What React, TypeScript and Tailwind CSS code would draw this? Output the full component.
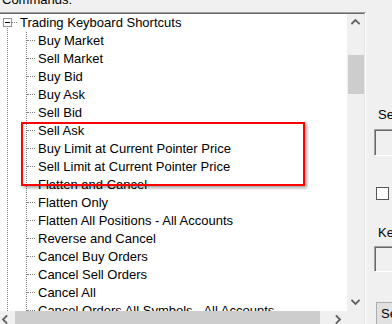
const commands = [
  "Buy Market",
  "Sell Market",
  "Buy Bid",
  "Buy Ask",
  "Sell Bid",
  "Sell Ask",
  "Buy Limit at Current Pointer Price",
  "Sell Limit at Current Pointer Price",
  "Flatten and Cancel",
  "Flatten Only",
  "Flatten All Positions - All Accounts",
  "Reverse and Cancel",
  "Cancel Buy Orders",
  "Cancel Sell Orders",
  "Cancel All",
  "Cancel Orders All Symbols - All Accounts",
];

function Chevron({ dir }: { dir: "up" | "down" | "left" | "right" }) {
  const d = {
    up: "M1 5.5 4.5 2 8 5.5",
    down: "M1 2.5 4.5 6 8 2.5",
    left: "M5.5 1 2 4.5 5.5 8",
    right: "M2.5 1 6 4.5 2.5 8",
  }[dir];
  return (
    <svg width="9" height="9" viewBox="0 0 9 9" fill="none">
      <path d={d} stroke="#606060" strokeWidth="1.8" strokeLinecap="square" />
    </svg>
  );
}

function TextBox() {
  return (
    <div className="h-full border-t border-l border-[#a0a0a0] border-r border-b border-r-white border-b-white">
      <div className="h-full border-t border-l border-[#696969] bg-[#f0f0f0]" />
    </div>
  );
}

export default function App() {
  return (
    <div className="flex h-[324px] w-[392px] overflow-hidden bg-[#f0f0f0] font-['Liberation_Sans',Arial,sans-serif] text-[13px] leading-[15px] text-black">
      {/* left: commands tree */}
      <div className="flex w-[366px] shrink-0 flex-col">
        <div className="-mt-[8px] h-[20px] shrink-0 pl-[2px]">Commands:</div>

        <div className="flex-1 border-t border-r border-t-[#a0a0a0] border-r-white">
          <div className="flex h-full flex-col border-t border-r border-t-[#696969] border-r-[#e3e3e3]">
            <div className="flex h-[297px] shrink-0">
              <div className="relative w-[347px] overflow-hidden bg-white">
                {/* tree connector lines */}
                <div className="absolute top-[14px] bottom-0 left-[7px] border-l border-dotted border-[#808080]" />
                <div className="absolute top-[18px] bottom-0 left-[26px] border-l border-dotted border-[#808080]" />

                <div className="-mt-[1px] flex flex-col">
                  <div className="flex h-[18px] items-center">
                    <span className="ml-[3px] flex h-[9px] w-[9px] items-center justify-center border border-[#919191] bg-white">
                      <span className="h-px w-[5px] bg-black" />
                    </span>
                    <span className="w-[5px] border-t border-dotted border-[#808080]" />
                    <span className="ml-[3px] whitespace-nowrap">Trading Keyboard Shortcuts</span>
                  </div>
                  {commands.map((c) => (
                    <div key={c} className="flex h-[18px] items-center">
                      <span className="ml-[27px] w-[8px] border-t border-dotted border-[#808080]" />
                      <span className="ml-[3px] whitespace-nowrap">{c}</span>
                    </div>
                  ))}
                </div>

                {/* highlight box */}
                <div className="absolute top-[108px] left-[21px] h-[64px] w-[284px] border-2 border-[#f00] shadow-[2px_2px_3px_rgba(0,0,0,0.35)]" />
              </div>

              {/* vertical scrollbar */}
              <div className="flex w-[17px] flex-col bg-[#f0f0f0]">
                <div className="flex h-[17px] items-center justify-center">
                  <Chevron dir="up" />
                </div>
                <div className="mt-[24px] ml-[1px] h-[39px] bg-[#cdcdcd]" />
                <div className="flex-1" />
                <div className="flex h-[17px] items-center justify-center">
                  <Chevron dir="down" />
                </div>
              </div>
            </div>

            {/* horizontal scrollbar */}
            <div className="flex h-[17px] shrink-0">
              <div className="flex w-[347px] bg-[#f0f0f0]">
                <div className="flex w-[15px] items-center justify-center pr-[4px]">
                  <Chevron dir="left" />
                </div>
                <div className="w-[305px] bg-[#cdcdcd]" />
                <div className="flex-1" />
                <div className="flex w-[17px] items-center justify-center">
                  <Chevron dir="right" />
                </div>
              </div>
            </div>
          </div>
        </div>
      </div>

      {/* right: key assignment panel */}
      <div className="flex min-w-0 flex-1 flex-col">
        <div className="mt-[107px] h-[15px] pl-[12px] whitespace-nowrap">Selected Command:</div>
        <div className="mt-[7px] ml-[8px] h-[27px] w-[60px] shrink-0">
          <TextBox />
        </div>
        <div className="mt-[31px] ml-[10px] h-[13px] w-[13px] shrink-0 border border-[#555] bg-white" />
        <div className="mt-[25px] h-[15px] pl-[12px] whitespace-nowrap">Keyboard Shortcut:</div>
        <div className="mt-[6px] ml-[8px] h-[26px] w-[60px] shrink-0">
          <TextBox />
        </div>
        <div className="mt-[30px] ml-[10px] h-[23px] w-[75px] shrink-0 border border-[#adadad] bg-[#e1e1e1] pt-[3px] pl-[4px] whitespace-nowrap">
          Set
        </div>
      </div>
    </div>
  );
}
